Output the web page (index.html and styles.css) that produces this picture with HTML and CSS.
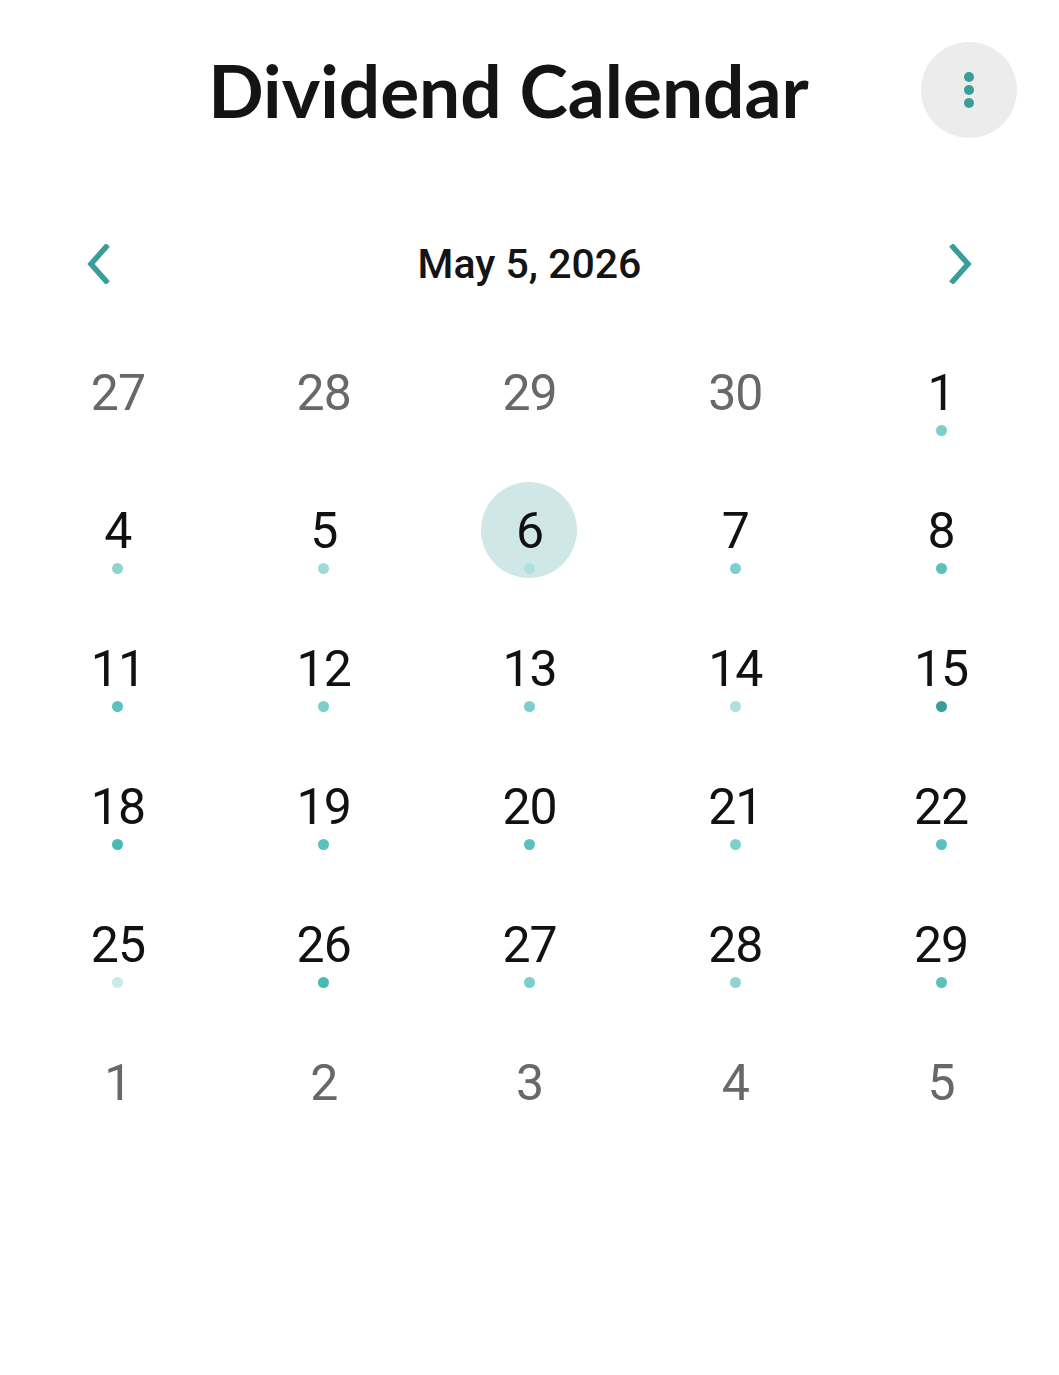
FILE: index.html
```html
<!DOCTYPE html>
<html lang="en">
<head>
<meta charset="utf-8">
<title>Dividend Calendar</title>
<link rel="stylesheet" href="styles.css">
</head>
<body>
<div class="app">
  <header class="header">
    <h1 class="title">Dividend Calendar</h1>
    <button class="menu-btn" aria-label="More options">
      <svg width="12" height="38" viewBox="0 0 12 38"><circle cx="6" cy="6" r="5"/><circle cx="6" cy="19" r="5"/><circle cx="6" cy="32" r="5"/></svg>
    </button>
  </header>

  <nav class="month-nav">
    <button class="chev" aria-label="Previous">
      <svg width="30" height="40" viewBox="0 0 30 40"><path d="M22 3 L7 20 L22 37" fill="none" stroke-width="5.5" stroke-linecap="square"/></svg>
    </button>
    <div class="date">May 5, 2026</div>
    <button class="chev" aria-label="Next">
      <svg width="30" height="40" viewBox="0 0 30 40"><path d="M8 3 L23 20 L8 37" fill="none" stroke-width="5.5" stroke-linecap="square"/></svg>
    </button>
  </nav>

  <div class="grid">
    <div class="cell"><div class="day other"><span class="num">27</span></div></div>
    <div class="cell"><div class="day other"><span class="num">28</span></div></div>
    <div class="cell"><div class="day other"><span class="num">29</span></div></div>
    <div class="cell"><div class="day other"><span class="num">30</span></div></div>
    <div class="cell"><div class="day"><span class="num">1</span><span class="dot l5"></span></div></div>

    <div class="cell"><div class="day"><span class="num">4</span><span class="dot l3"></span></div></div>
    <div class="cell"><div class="day"><span class="num">5</span><span class="dot l4"></span></div></div>
    <div class="cell"><div class="day selected"><span class="num">6</span><span class="dot l2"></span></div></div>
    <div class="cell"><div class="day"><span class="num">7</span><span class="dot l5"></span></div></div>
    <div class="cell"><div class="day"><span class="num">8</span><span class="dot l6"></span></div></div>

    <div class="cell"><div class="day"><span class="num">11</span><span class="dot l6"></span></div></div>
    <div class="cell"><div class="day"><span class="num">12</span><span class="dot l5"></span></div></div>
    <div class="cell"><div class="day"><span class="num">13</span><span class="dot l5"></span></div></div>
    <div class="cell"><div class="day"><span class="num">14</span><span class="dot l2"></span></div></div>
    <div class="cell"><div class="day"><span class="num">15</span><span class="dot l8"></span></div></div>

    <div class="cell"><div class="day"><span class="num">18</span><span class="dot l7"></span></div></div>
    <div class="cell"><div class="day"><span class="num">19</span><span class="dot l6"></span></div></div>
    <div class="cell"><div class="day"><span class="num">20</span><span class="dot l6"></span></div></div>
    <div class="cell"><div class="day"><span class="num">21</span><span class="dot l5"></span></div></div>
    <div class="cell"><div class="day"><span class="num">22</span><span class="dot l6"></span></div></div>

    <div class="cell"><div class="day"><span class="num">25</span><span class="dot l1"></span></div></div>
    <div class="cell"><div class="day"><span class="num">26</span><span class="dot l7"></span></div></div>
    <div class="cell"><div class="day"><span class="num">27</span><span class="dot l5"></span></div></div>
    <div class="cell"><div class="day"><span class="num">28</span><span class="dot l3"></span></div></div>
    <div class="cell"><div class="day"><span class="num">29</span><span class="dot l6"></span></div></div>

    <div class="cell"><div class="day other"><span class="num">1</span></div></div>
    <div class="cell"><div class="day other"><span class="num">2</span></div></div>
    <div class="cell"><div class="day other"><span class="num">3</span></div></div>
    <div class="cell"><div class="day other"><span class="num">4</span></div></div>
    <div class="cell"><div class="day other"><span class="num">5</span></div></div>
  </div>
</div>
</body>
</html>
```

FILE: styles.css
```css
* { box-sizing: border-box; }
html, body { margin: 0; padding: 0; background: #ffffff; }
body { font-family: Roboto, "Liberation Sans", sans-serif; color: #111111; }

.app { width: 1059px; }

.header {
  display: flex;
  align-items: center;
  height: 180px;
  padding-right: 42px;
}
.title {
  flex: 1;
  margin: 0 -96px 0 0;
  text-align: center;
  font-family: Lato, "Noto Sans", sans-serif;
  font-weight: 700;
  font-size: 73px;
  letter-spacing: 0;
  color: #141414;
  line-height: 1;
}
.menu-btn {
  width: 96px;
  height: 96px;
  border: 0;
  border-radius: 50%;
  background: #ececec;
  display: flex;
  align-items: center;
  justify-content: center;
  padding: 0;
}
.menu-btn svg { fill: #3a9e98; display: block; }

.month-nav {
  display: flex;
  align-items: center;
  justify-content: space-between;
  height: 72px;
  margin-top: 48px;
  padding: 0 84px 0 84px;
}
.chev {
  border: 0;
  background: none;
  padding: 0;
  width: 30px;
  height: 40px;
}
.chev svg { display: block; stroke: #3a9e98; }
.date {
  font-family: Roboto, sans-serif;
  font-weight: 500;
  font-size: 41px;
  color: #141414;
}

.grid {
  display: grid;
  grid-template-columns: repeat(5, 1fr);
  grid-auto-rows: 138px;
  padding: 0 15px;
  margin-top: 23px;
}
.cell {
  display: flex;
  justify-content: center;
  align-items: flex-start;
  padding-top: 21px;
}
.day {
  width: 96px;
  height: 96px;
  border-radius: 50%;
  display: flex;
  flex-direction: column;
  align-items: center;
}
.day.selected { background: #cfe7e7; }
.num {
  display: block;
  margin-top: 21px;
  height: 56px;
  line-height: 56px;
  font-size: 50px;
  font-weight: 400;
  letter-spacing: -1px;
  color: #111111;
}
.day.other .num { color: #686868; }
.dot {
  display: block;
  width: 11px;
  height: 11px;
  border-radius: 50%;
  margin-top: 4px;
}
.l1 { background: #c9ebea; }
.l2 { background: #aee0df; }
.l3 { background: #8fd4d1; }
.l4 { background: #9fd9d8; }
.l5 { background: #7ccfcc; }
.l6 { background: #5cc0bc; }
.l7 { background: #4ab9b4; }
.l8 { background: #3a9e98; }
```
